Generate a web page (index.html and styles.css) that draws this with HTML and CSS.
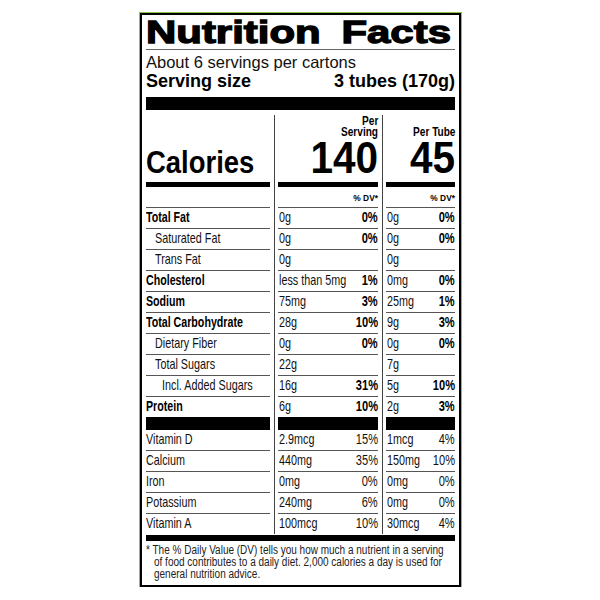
FILE: index.html
```html
<!DOCTYPE html>
<html lang="en">
<head>
<meta charset="utf-8">
<title>Nutrition Facts</title>
<link rel="stylesheet" href="styles.css">
</head>
<body>
<div class="label">
  <h1 class="title"><span>Nutrition Facts</span></h1>
  <p class="servings">About 6 servings per cartons</p>
  <div class="size"><span>Serving size</span><span>3 tubes (170g)</span></div>
  <div class="bar-lg"></div>

  <div class="table">
    <div class="col c1">
      <div class="head"><span class="cal">Calories</span></div>
      <div class="bar-md"></div>
      <div class="dv"></div>
      <div class="row b"><span>Total Fat</span></div>
      <div class="row i1"><span>Saturated Fat</span></div>
      <div class="row i1"><span>Trans Fat</span></div>
      <div class="row b"><span>Cholesterol</span></div>
      <div class="row b"><span>Sodium</span></div>
      <div class="row b"><span>Total Carbohydrate</span></div>
      <div class="row i1"><span>Dietary Fiber</span></div>
      <div class="row i1"><span>Total Sugars</span></div>
      <div class="row i2"><span>Incl. Added Sugars</span></div>
      <div class="row b last"><span>Protein</span></div>
      <div class="bar-lg sep"></div>
      <div class="row"><span>Vitamin D</span></div>
      <div class="row"><span>Calcium</span></div>
      <div class="row"><span>Iron</span></div>
      <div class="row"><span>Potassium</span></div>
      <div class="row last"><span>Vitamin A</span></div>
    </div>

    <div class="col c2">
      <div class="head">
        <span class="per">Per</span>
        <span class="per">Serving</span>
        <span class="big">140</span>
      </div>
      <div class="bar-md"></div>
      <div class="dv"><span>% DV*</span></div>
      <div class="row val"><span class="v">0g</span><span class="p">0%</span></div>
      <div class="row val"><span class="v">0g</span><span class="p">0%</span></div>
      <div class="row val"><span class="v">0g</span></div>
      <div class="row val"><span class="v">less than 5mg</span><span class="p">1%</span></div>
      <div class="row val"><span class="v">75mg</span><span class="p">3%</span></div>
      <div class="row val"><span class="v">28g</span><span class="p">10%</span></div>
      <div class="row val"><span class="v">0g</span><span class="p">0%</span></div>
      <div class="row val"><span class="v">22g</span></div>
      <div class="row val"><span class="v">16g</span><span class="p">31%</span></div>
      <div class="row val last"><span class="v">6g</span><span class="p">10%</span></div>
      <div class="bar-lg sep"></div>
      <div class="row val vit"><span class="v">2.9mcg</span><span class="p">15%</span></div>
      <div class="row val vit"><span class="v">440mg</span><span class="p">35%</span></div>
      <div class="row val vit"><span class="v">0mg</span><span class="p">0%</span></div>
      <div class="row val vit"><span class="v">240mg</span><span class="p">6%</span></div>
      <div class="row val vit last"><span class="v">100mcg</span><span class="p">10%</span></div>
    </div>

    <div class="col c3">
      <div class="head">
        <span class="per">Per Tube</span>
        <span class="big">45</span>
      </div>
      <div class="bar-md"></div>
      <div class="dv"><span>% DV*</span></div>
      <div class="row val"><span class="v">0g</span><span class="p">0%</span></div>
      <div class="row val"><span class="v">0g</span><span class="p">0%</span></div>
      <div class="row val"><span class="v">0g</span></div>
      <div class="row val"><span class="v">0mg</span><span class="p">0%</span></div>
      <div class="row val"><span class="v">25mg</span><span class="p">1%</span></div>
      <div class="row val"><span class="v">9g</span><span class="p">3%</span></div>
      <div class="row val"><span class="v">0g</span><span class="p">0%</span></div>
      <div class="row val"><span class="v">7g</span></div>
      <div class="row val"><span class="v">5g</span><span class="p">10%</span></div>
      <div class="row val last"><span class="v">2g</span><span class="p">3%</span></div>
      <div class="bar-lg sep"></div>
      <div class="row val vit"><span class="v">1mcg</span><span class="p">4%</span></div>
      <div class="row val vit"><span class="v">150mg</span><span class="p">10%</span></div>
      <div class="row val vit"><span class="v">0mg</span><span class="p">0%</span></div>
      <div class="row val vit"><span class="v">0mg</span><span class="p">0%</span></div>
      <div class="row val vit last"><span class="v">30mcg</span><span class="p">4%</span></div>
    </div>
  </div>

  <div class="bar-sm"></div>
  <p class="foot">* The % Daily Value (DV) tells you how much a nutrient in a serving<br>of food contributes to a daily diet. 2,000 calories a day is used for<br>general nutrition advice.</p>
</div>
</body>
</html>
```
FILE: styles.css
```css
* {
  box-sizing: border-box;
  margin: 0;
  padding: 0;
}

body {
  margin: 0;
  background: #fff;
  color: #111;
  font-family: "Liberation Sans", Arial, sans-serif;
}

.label {
  width: 321px;
  margin: 13px 0 0 140px;
  border: 2px solid #000;
  outline: 1px solid #8cc63f;
  padding: 0 4px 5px 4px;
}

/* Title */
.title {
  font-size: 32px;
  line-height: 34px;
  font-weight: 700;
  white-space: nowrap;
  border-bottom: 1px solid #666;
  color: #000;
}
.title span {
  display: inline-block;
  transform: scaleX(1.31);
  transform-origin: left center;
  -webkit-text-stroke: 1.3px #000;
  word-spacing: 7px;
}

.servings {
  font-size: 16.5px;
  line-height: 18px;
  padding-top: 3px;
}

.size {
  display: flex;
  justify-content: space-between;
  font-size: 18px;
  line-height: 20px;
  font-weight: 700;
  color: #000;
}

.bar-lg {
  height: 13px;
  background: #000;
  margin-top: 6px;
}
.bar-lg.sep {
  margin-top: 0;
}
.bar-md {
  height: 5px;
  background: #000;
}
.bar-sm {
  height: 6px;
  background: #000;
  margin-top: 1px;
}

/* Table */
.table {
  display: flex;
  margin-top: 5px;
}
.col {
  display: flex;
  flex-direction: column;
}
.c1 {
  width: 124px;
}
.c2 {
  width: 104px;
  margin-left: 4px;
  border-left: 1px solid #444;
  padding-left: 3px;
}
.c3 {
  width: 73px;
  margin-left: 4px;
  border-left: 1px solid #444;
  padding-left: 3px;
}

.head {
  height: 67px;
  display: flex;
  flex-direction: column;
  justify-content: flex-end;
  padding-bottom: 4px;
  font-weight: 700;
  color: #000;
}
.c2 .head,
.c3 .head {
  align-items: flex-end;
}
.cal {
  display: block;
  font-size: 30.5px;
  line-height: 32px;
  transform: scaleX(0.9);
  transform-origin: left center;
  white-space: nowrap;
}
.per {
  display: block;
  font-size: 12px;
  line-height: 11px;
  transform: scaleX(0.84);
  transform-origin: right center;
  white-space: nowrap;
}
.big {
  display: block;
  font-size: 45px;
  line-height: 40px;
  transform: scaleX(0.9);
  transform-origin: right center;
}

.dv {
  height: 21px;
  border-bottom: 1px solid #555;
  padding-top: 2px;
  font-size: 9.5px;
  line-height: 18px;
  font-weight: 700;
  text-align: right;
  color: #000;
}
.dv span {
  display: inline-block;
  transform: scaleX(0.88);
  transform-origin: right center;
}

.row {
  height: 21px;
  border-bottom: 1px solid #555;
  font-size: 15px;
  line-height: 18px;
  white-space: nowrap;
}
.row.last {
  height: 20px;
  border-bottom: 0;
}
.row span {
  display: block;
  transform: scaleX(0.72);
  transform-origin: left center;
}
.row.b {
  font-weight: 700;
  color: #000;
}
.row.b span {
  transform: scaleX(0.71);
}
.row.i1 {
  padding-left: 9px;
}
.row.i2 {
  padding-left: 16px;
}

.row.val {
  display: flex;
  padding-left: 1px;
}
.row.val .v {
  flex: 1 1 0;
  min-width: 0;
}
.row.val .p {
  flex: none;
  font-weight: 700;
  color: #000;
  transform: scaleX(0.74);
  transform-origin: right center;
}
.row.vit .p {
  font-weight: 400;
  color: #111;
}

/* Footnote */
.foot {
  margin-top: 3px;
  font-size: 12.5px;
  line-height: 12px;
  white-space: nowrap;
  padding-left: 10px;
  text-indent: -10px;
  transform: scaleX(0.8);
  transform-origin: left center;
  color: #222;
}
```
